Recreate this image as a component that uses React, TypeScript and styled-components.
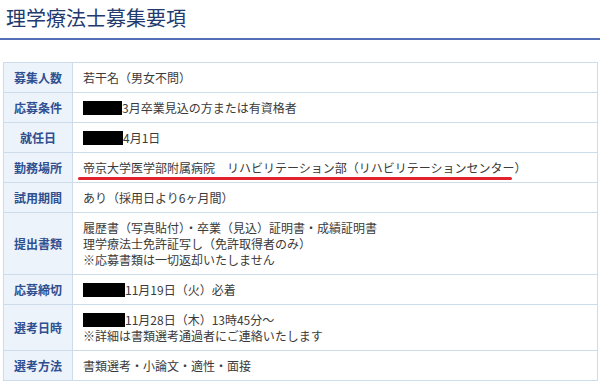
import React from "react";
import styled, { createGlobalStyle } from "styled-components";

const GlobalStyle = createGlobalStyle`
  * { box-sizing: border-box; }
  html, body { margin: 0; padding: 0; background: #ffffff; }
  body {
    font-family: "Noto Sans CJK JP", "Noto Sans", sans-serif;
    color: #3a3a3a;
  }
`;

const Page = styled.div`
  width: 600px;
  background: #ffffff;
`;

const Title = styled.h1`
  margin: 0;
  padding: 6px 0 8px 6px;
  font-size: 20px;
  line-height: 24px;
  font-weight: 400;
  color: #233a6e;
  border-bottom: 2px solid #5370b6;
`;

const Table = styled.table`
  margin: 22px 3px 0 3px;
  width: 595px;
  border-collapse: collapse;
  font-size: 12px;
  line-height: 16px;
`;

const Head = styled.th`
  width: 69px;
  padding: 7px 4px 6px;
  background: #edf3fa;
  color: #2e4f90;
  font-weight: 700;
  text-align: center;
  vertical-align: middle;
  border: 1px solid #cddcea;
  white-space: nowrap;
`;

const Value = styled.td`
  padding: 7px 10px 6px;
  background: #ffffff;
  color: #3a3a3a;
  text-align: left;
  vertical-align: middle;
  border: 1px solid #cddcea;
`;

const Line = styled.div`
  white-space: nowrap;
`;

const Redacted = styled.span<{ $w: number }>`
  display: inline-block;
  width: ${(p) => p.$w}px;
  height: 14px;
  vertical-align: -2px;
  background: #000000;
`;

/* hand-drawn red marker under the workplace name */
const Marked = styled.span`
  position: relative;
  &::after {
    content: "";
    position: absolute;
    left: -5px;
    width: 434px;
    bottom: -4px;
    height: 3px;
    border-radius: 2px;
    background: #e2222c;
  }
`;

type Row = { label: string; lines: React.ReactNode[] };

const rows: Row[] = [
  { label: "募集人数", lines: ["若干名（男女不問）"] },
  {
    label: "応募条件",
    lines: [
      <>
        <Redacted $w={39} />
        3月卒業見込の方または有資格者
      </>,
    ],
  },
  {
    label: "就任日",
    lines: [
      <>
        <Redacted $w={40} />
        4月1日
      </>,
    ],
  },
  {
    label: "勤務場所",
    lines: [
      <Marked>
        帝京大学医学部附属病院　リハビリテーション部（リハビリテーションセンター）
      </Marked>,
    ],
  },
  { label: "試用期間", lines: ["あり（採用日より6ヶ月間）"] },
  {
    label: "提出書類",
    lines: [
      "履歴書（写真貼付）・卒業（見込）証明書・成績証明書",
      "理学療法士免許証写し（免許取得者のみ）",
      "※応募書類は一切返却いたしません",
    ],
  },
  {
    label: "応募締切",
    lines: [
      <>
        <Redacted $w={42} />
        11月19日（火）必着
      </>,
    ],
  },
  {
    label: "選考日時",
    lines: [
      <>
        <Redacted $w={42} />
        11月28日（木）13時45分～
      </>,
      "※詳細は書類選考通過者にご連絡いたします",
    ],
  },
  { label: "選考方法", lines: ["書類選考・小論文・適性・面接"] },
];

export default function App() {
  return (
    <Page>
      <GlobalStyle />
      <Title>理学療法士募集要項</Title>
      <Table>
        <tbody>
          {rows.map((r) => (
            <tr key={r.label}>
              <Head>{r.label}</Head>
              <Value>
                {r.lines.map((l, i) => (
                  <Line key={i}>{l}</Line>
                ))}
              </Value>
            </tr>
          ))}
        </tbody>
      </Table>
    </Page>
  );
}
